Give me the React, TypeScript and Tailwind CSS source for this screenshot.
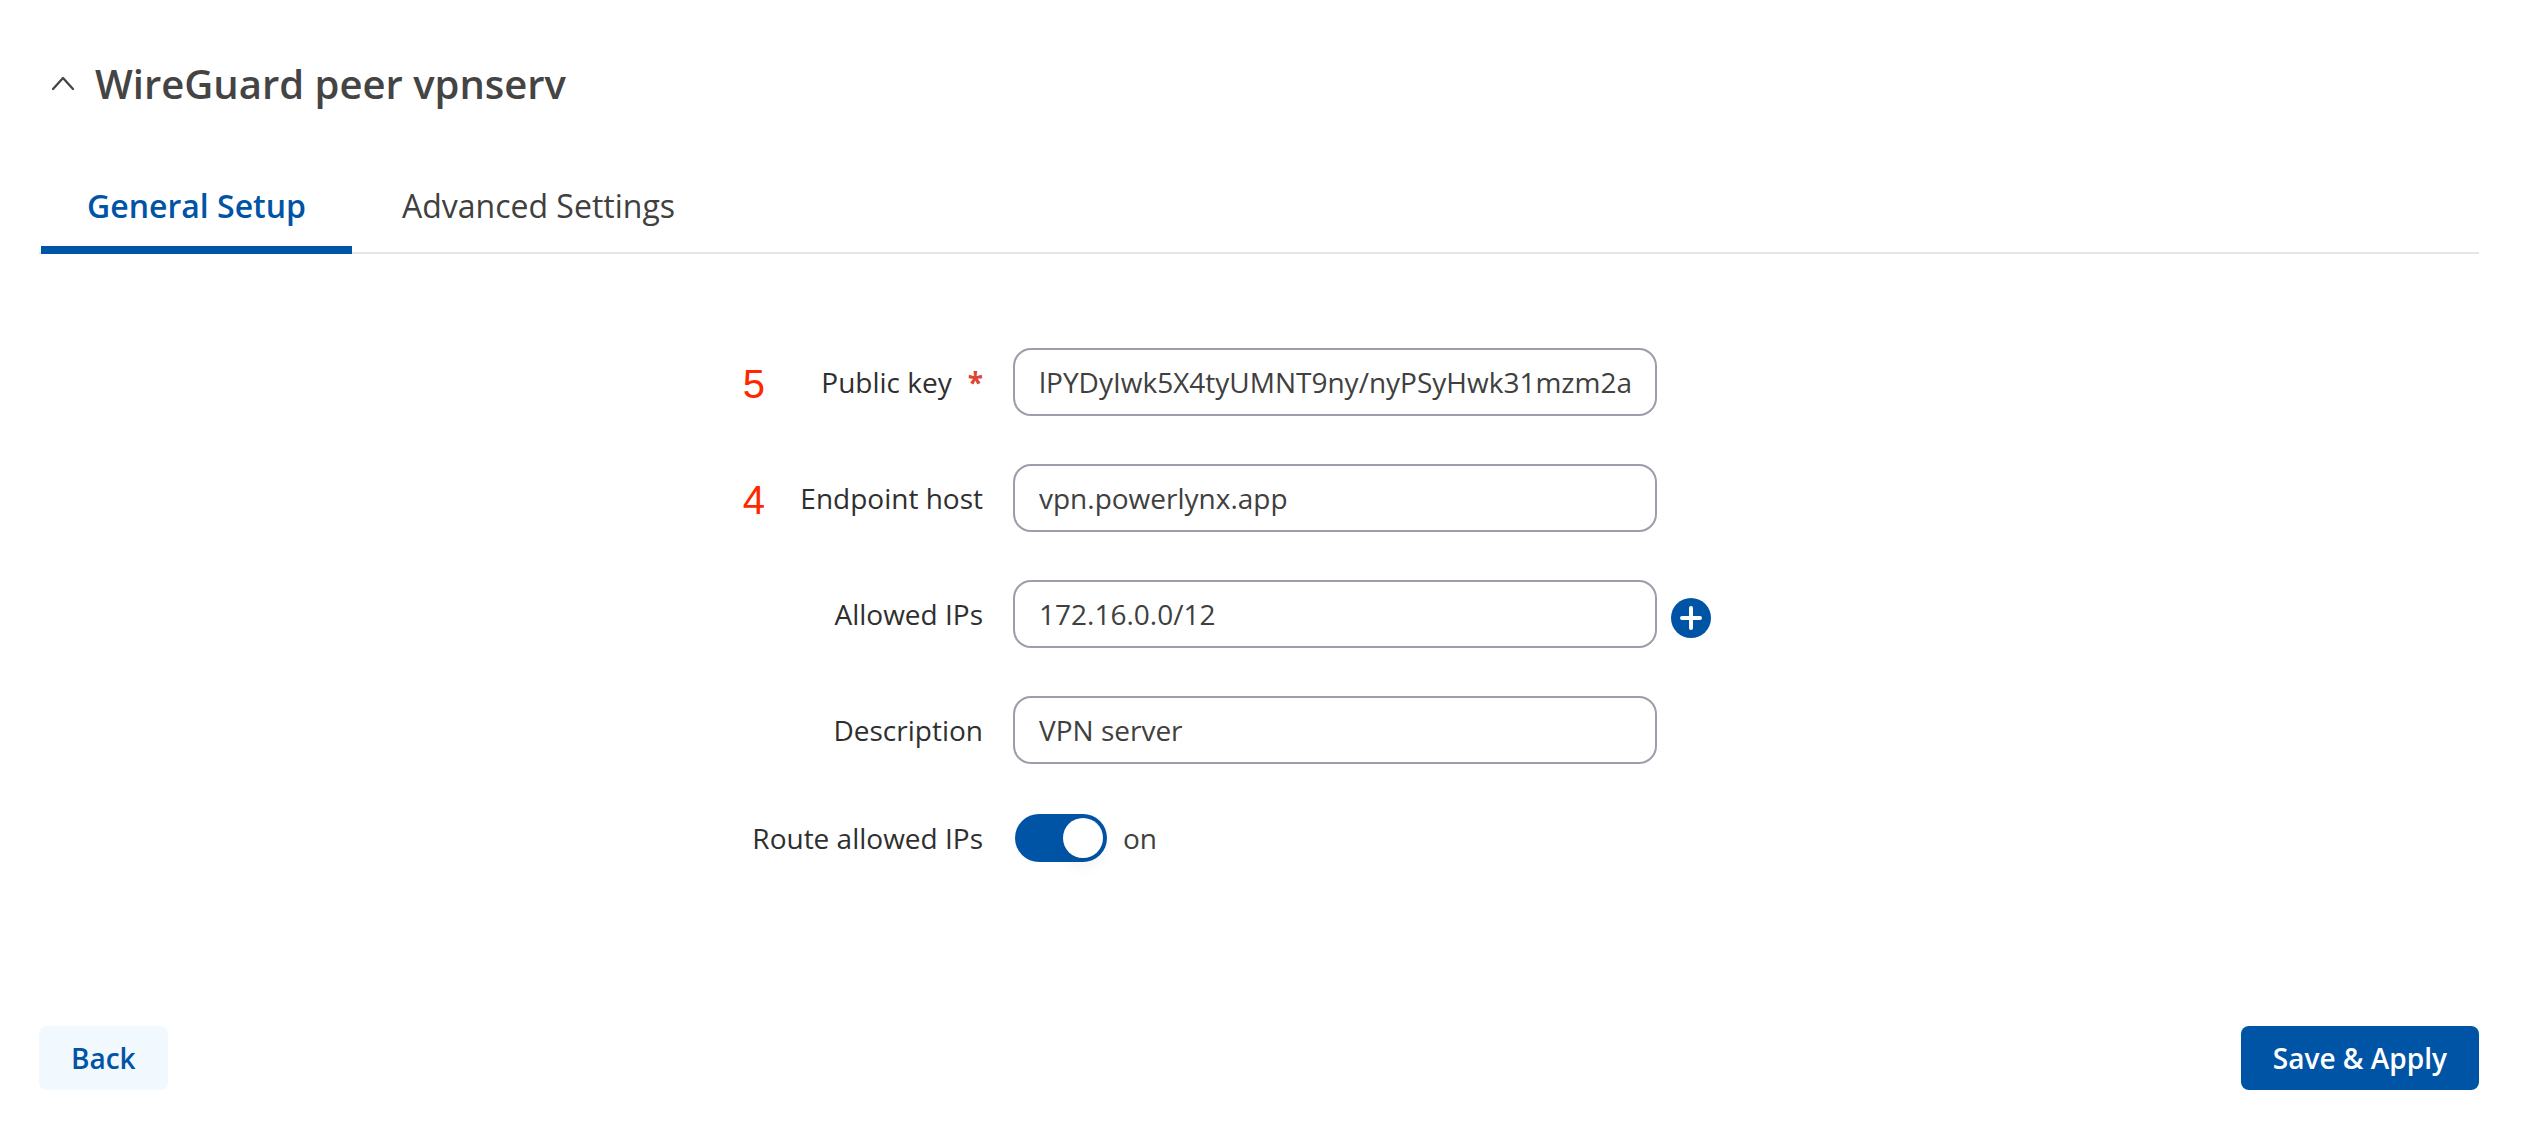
import { useState, type ReactNode } from "react";

const inputClass =
  "h-[68px] w-[644px] rounded-[18px] border-2 border-[#9b9eab] bg-white px-6 text-[28px] text-[#404040] outline-none focus:border-[#0054a6]";

const tabClass =
  "border-b-8 border-transparent px-[46px] py-[18px] aria-selected:border-[#0054a6] aria-selected:font-semibold aria-selected:text-[#0054a6]";

type RowProps = {
  id: string;
  label: string;
  required?: boolean;
  note?: string;
  children: ReactNode;
};

function Row({ id, label, required, note, children }: RowProps) {
  return (
    <div className="grid grid-cols-[2fr_3fr] items-center">
      <div className="flex items-center justify-end pr-[30px]">
        {note && (
          <span className="pt-1 font-['Liberation_Sans',sans-serif] text-[40px] leading-none text-[#ff2600]">
            {note}
          </span>
        )}
        <label
          htmlFor={id}
          className="min-w-[218px] text-right leading-10 whitespace-nowrap text-[#2f2f2f]"
        >
          {label}
          {required && <span className="ml-4 font-bold text-[#dc4633]">*</span>}
        </label>
      </div>
      <div className="flex items-center">{children}</div>
    </div>
  );
}

export default function App() {
  const [tab, setTab] = useState("general");
  const [routed, setRouted] = useState(true);

  return (
    <main className="bg-white pt-14 pr-[51px] pb-12 pl-[39px] font-['Open_Sans',sans-serif] text-[28px]">
      <h2 className="text-[40px] leading-14 font-semibold text-[#444444]">
        <button type="button" aria-expanded="true" className="flex items-center gap-5 pl-3">
          <svg width="24" height="16" viewBox="0 0 24 16" fill="none" aria-hidden="true">
            <path
              d="M2 13L12 2L22 13"
              stroke="currentColor"
              strokeWidth="2.3"
              strokeLinecap="round"
              strokeLinejoin="round"
            />
          </svg>
          WireGuard peer vpnserv
        </button>
      </h2>

      <div
        role="tablist"
        className="mt-[54px] flex gap-1 pl-0.5 text-[32px] leading-11 text-[#404040] shadow-[inset_0_-2px_0_#e5e5ea]"
      >
        <button
          type="button"
          role="tab"
          aria-selected={tab === "general"}
          onClick={() => setTab("general")}
          className={tabClass}
        >
          General Setup
        </button>
        <button
          type="button"
          role="tab"
          aria-selected={tab === "advanced"}
          onClick={() => setTab("advanced")}
          className={tabClass}
        >
          Advanced Settings
        </button>
      </div>

      <form className="mt-[94px] mr-[5px] flex flex-col gap-12">
        <Row id="public-key" label="Public key" required note="5">
          <input
            id="public-key"
            type="text"
            className={inputClass}
            defaultValue="lPYDyIwk5X4tyUMNT9ny/nyPSyHwk31mzm2a"
          />
        </Row>
        <Row id="endpoint-host" label="Endpoint host" note="4">
          <input
            id="endpoint-host"
            type="text"
            className={inputClass}
            defaultValue="vpn.powerlynx.app"
          />
        </Row>
        <Row id="allowed-ips" label="Allowed IPs">
          <input id="allowed-ips" type="text" className={inputClass} defaultValue="172.16.0.0/12" />
          <button type="button" aria-label="Add allowed IP" className="mt-2 ml-3.5">
            <svg width="40" height="40" viewBox="0 0 40 40" fill="none" aria-hidden="true">
              <circle cx="20" cy="20" r="20" fill="#0054a6" />
              <path d="M20 10V30M11 20H29" stroke="#ffffff" strokeWidth="4" strokeLinecap="round" />
            </svg>
          </button>
        </Row>
        <Row id="description" label="Description">
          <input id="description" type="text" className={inputClass} defaultValue="VPN server" />
        </Row>
        <div className="pt-0.5">
          <Row id="route-allowed" label="Route allowed IPs">
            <span className="ml-0.5 grid items-center">
              <input
                id="route-allowed"
                type="checkbox"
                role="switch"
                checked={routed}
                onChange={(e) => setRouted(e.target.checked)}
                className="peer col-start-1 row-start-1 h-12 w-[92px] cursor-pointer appearance-none rounded-full bg-[#9b9eab] checked:bg-[#0054a6]"
              />
              <span className="pointer-events-none col-start-1 row-start-1 ml-1 size-10 rounded-full bg-white shadow-[0_8px_16px_rgba(0,0,0,0.06)] peer-checked:ml-12" />
            </span>
            <span className="ml-4 leading-10 text-[#404040]">{routed ? "on" : "off"}</span>
          </Row>
        </div>
      </form>

      <div className="mt-[164px] flex justify-between font-semibold">
        <button type="button" className="h-16 rounded-lg bg-[#f1f8fe] px-8 text-[#0054a6]">
          Back
        </button>
        <button type="button" className="h-16 rounded-lg bg-[#0054a6] px-8 text-white">
          Save &amp; Apply
        </button>
      </div>
    </main>
  );
}
